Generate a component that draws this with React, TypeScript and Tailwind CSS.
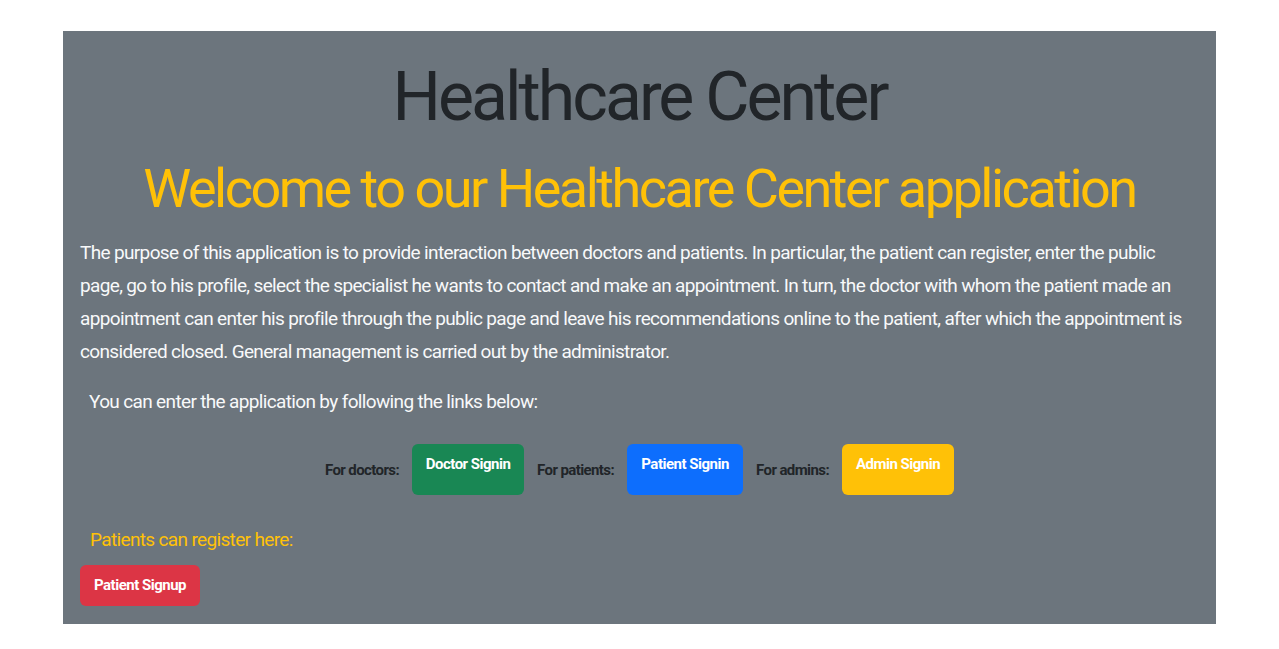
export default function App() {
  const font = { fontFamily: "Roboto, 'Liberation Sans', sans-serif" };

  return (
    <div className="min-h-screen bg-white pt-[31px]" style={font}>
      <div className="mx-auto w-[1153px] bg-[#6c757d] px-[17px] pb-[18px]">
        <h1 className="pt-[23px] text-center text-[68px] leading-[86px] tracking-[-3px] text-[#212529]">
          Healthcare Center
        </h1>
        <h2 className="mt-[15px] text-center text-[54px] leading-[68px] tracking-[-2.5px] text-[#ffc107]">
          Welcome to our Healthcare Center application
        </h2>
        <p className="mt-[13px] text-[19px] leading-[33px] tracking-[-0.65px] text-[#f8f9fa]">
          The purpose of this application is to provide interaction between doctors and patients. In particular,
          the patient can register, enter the public page, go to his profile, select the specialist he wants to
          contact and make an appointment. In turn, the doctor with whom the patient made an appointment can enter
          his profile through the public page and leave his recommendations online to the patient, after which the
          appointment is considered closed. General management is carried out by the administrator.
        </p>
        <p className="mt-[17px] pl-[9px] text-[19px] leading-[33px] tracking-[-0.65px] text-[#f8f9fa]">
          You can enter the application by following the links below:
        </p>

        <div className="mt-[26px] flex items-start justify-center gap-[13px]">
          <span className="pt-[14px] text-[15px] leading-[24px] font-bold tracking-[-0.6px] text-[#212529]">For doctors:</span>
          <button className="w-[112px] rounded-[6px] bg-[#198754] pt-[8px] pb-[19px] text-[15px] leading-[24px] font-bold tracking-[-0.5px] text-white">
            Doctor Signin
          </button>
          <span className="pt-[14px] text-[15px] leading-[24px] font-bold tracking-[-0.6px] text-[#212529]">For patients:</span>
          <button className="w-[116px] rounded-[6px] bg-[#0d6efd] pt-[8px] pb-[19px] text-[15px] leading-[24px] font-bold tracking-[-0.5px] text-white">
            Patient Signin
          </button>
          <span className="pt-[14px] text-[15px] leading-[24px] font-bold tracking-[-0.6px] text-[#212529]">For admins:</span>
          <button className="w-[112px] rounded-[6px] bg-[#ffc107] pt-[8px] pb-[19px] text-[15px] leading-[24px] font-bold tracking-[-0.5px] text-white">
            Admin Signin
          </button>
        </div>

        <p className="mt-[30px] pl-[10px] text-[19px] leading-[30px] tracking-[-0.65px] text-[#ffc107]">
          Patients can register here:
        </p>
        <button className="mt-[10px] block h-[41px] w-[120px] rounded-[6px] bg-[#dc3545] text-[15px] font-bold tracking-[-0.5px] text-white">
          Patient Signup
        </button>
      </div>
    </div>
  );
}
